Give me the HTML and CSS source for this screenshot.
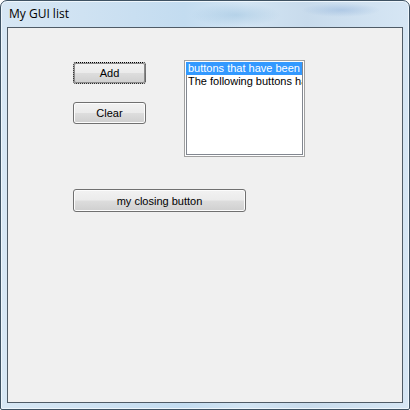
FILE: index.html
```html
<!DOCTYPE html>
<html>
<head>
<meta charset="utf-8">
<link rel="stylesheet" href="styles.css">
</head>
<body>
<div class="window">
  <div class="titlebar">
    <span class="title">My GUI list</span>
    <span class="blur-a"></span>
    <span class="blur-b"></span>
  </div>
  <div class="client">
    <div class="row">
      <div class="col">
        <button class="btn btn-focus">Add</button>
        <button class="btn">Clear</button>
      </div>
      <div class="listbox">
        <div class="item selected">buttons that have been clicked</div>
        <div class="item">The following buttons have been clicked</div>
      </div>
    </div>
    <button class="btn btn-wide">my closing button</button>
  </div>
</div>
</body>
</html>
```
FILE: styles.css
```css
html, body {
  margin: 0;
  padding: 0;
  width: 410px;
  height: 410px;
  overflow: hidden;
  background: #ffffff;
}
.window {
  position: relative;
  box-sizing: border-box;
  width: 410px;
  height: 410px;
  border: 1px solid #3e5263;
  border-radius: 7px 7px 2px 2px;
  background: linear-gradient(90deg, #d7e7f4 0%, #cfe2f2 20%, #c3dcf0 45%, #d2e4f3 60%, #c8dbec 75%, #d6e6f4 100%);
  box-shadow: inset 0 0 0 1px #eef6fc;
  padding: 0 6px 6px 6px;
  display: flex;
  flex-direction: column;
  overflow: hidden;
}
.titlebar {
  height: 26px;
  display: flex;
  align-items: center;
  padding-left: 2px;
  flex-shrink: 0;
}
.title {
  font-family: "Open Sans", "Noto Sans", sans-serif;
  font-size: 12px;
  color: #000;
  position: relative;
  top: -1px;
  z-index: 1;
}
.blur-a {
  position: absolute;
  left: 190px;
  top: 2px;
  width: 90px;
  height: 24px;
  background: radial-gradient(ellipse at center, rgba(150,190,220,0.45), rgba(150,190,220,0) 70%);
}
.blur-b {
  position: absolute;
  left: 300px;
  top: 2px;
  width: 80px;
  height: 14px;
  background: radial-gradient(ellipse at center, rgba(120,160,210,0.35), rgba(120,160,210,0) 70%);
}
.client {
  flex: 1;
  box-sizing: border-box;
  border: 1px solid #4f5b66;
  background: #f0f0f0;
  padding: 32px 0 0 65px;
  font-family: "Liberation Sans", Arial, sans-serif;
  font-size: 11px;
  color: #000;
}
.row {
  display: flex;
  align-items: flex-start;
  gap: 38px;
}
.col {
  display: flex;
  flex-direction: column;
  gap: 18px;
  padding-top: 2px;
  width: 73px;
}
.btn {
  box-sizing: border-box;
  height: 22px;
  width: 73px;
  margin: 0;
  padding: 0;
  border: 1px solid #707070;
  border-radius: 3px;
  background: linear-gradient(#f2f2f2 0%, #ebebeb 48%, #dddddd 52%, #cfcfcf 100%);
  box-shadow: inset 0 0 0 1px #fcfcfc;
  font-family: "Liberation Sans", Arial, sans-serif;
  font-size: 11px;
  color: #000;
  line-height: 18px;
  text-align: center;
}
.btn-focus {
  border: 1px dotted #000;
  box-shadow: inset 0 0 0 1px #8a8a8a;
}
.btn-wide {
  width: 173px;
  height: 23px;
  margin-top: 32px;
}
.listbox {
  box-sizing: border-box;
  width: 121px;
  height: 97px;
  border: 1px solid #a0a0a0;
  box-shadow: inset 0 0 0 1px #ffffff, inset 0 0 0 2px #828790;
  background: #fff;
  padding: 1px 2px 2px 1px;
  overflow: hidden;
}
.item {
  height: 13px;
  line-height: 13px;
  white-space: nowrap;
  overflow: hidden;
  padding-left: 2px;
  font-size: 11px;
}
.selected {
  background: #3399ff;
  color: #fff;
}
```
